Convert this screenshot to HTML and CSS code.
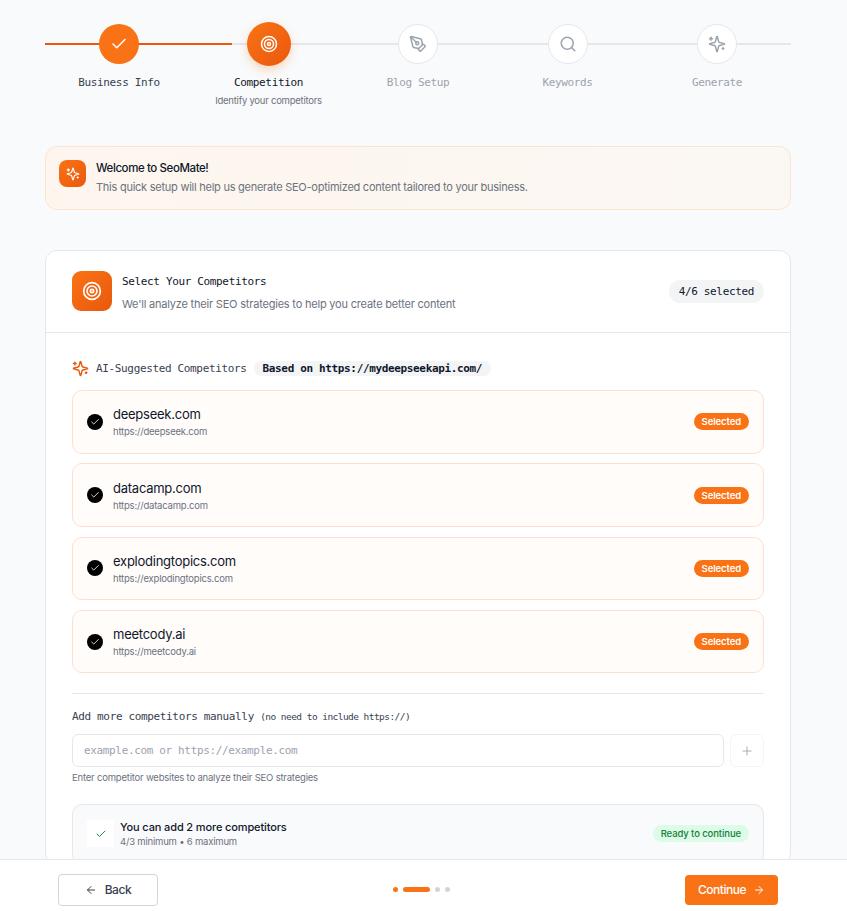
FILE: index.html
```html
<!DOCTYPE html>
<html lang="en">
<head>
    <meta charset="UTF-8">
    <meta name="viewport" content="width=device-width, initial-scale=1.0">
    <title>SeoMate Setup</title>
    <link rel="stylesheet" href="styles.css">
</head>
<body>
    <svg class="icon-defs" aria-hidden="true">
        <symbol id="i-check" viewBox="0 0 24 24"><path d="M20 6 9 17l-5-5"/></symbol>
        <symbol id="i-target" viewBox="0 0 24 24"><circle cx="12" cy="12" r="10"/><circle cx="12" cy="12" r="6"/><circle cx="12" cy="12" r="2"/></symbol>
        <symbol id="i-pen" viewBox="0 0 24 24"><path d="M15.707 21.293a1 1 0 0 1-1.414 0l-1.586-1.586a1 1 0 0 1 0-1.414l5.586-5.586a1 1 0 0 1 1.414 0l1.586 1.586a1 1 0 0 1 0 1.414z"/><path d="m18 13-1.375-6.874a1 1 0 0 0-.746-.776L3.235 2.028a1 1 0 0 0-1.207 1.207L5.35 15.879a1 1 0 0 0 .776.746L13 18"/><path d="m2.3 2.3 7.286 7.286"/><circle cx="11" cy="11" r="2"/></symbol>
        <symbol id="i-search" viewBox="0 0 24 24"><circle cx="11" cy="11" r="8"/><path d="m21 21-4.3-4.3"/></symbol>
        <symbol id="i-sparkles" viewBox="0 0 24 24"><path d="M14.063 15.5A2 2 0 0 1 15.5 14.063l6.135-1.582a.5.5 0 0 0 0-.962L15.5 9.936A2 2 0 0 1 14.063 8.5l-1.582-6.135a.5.5 0 0 0-.963 0L9.937 8.5A2 2 0 0 1 8.5 9.937l-6.135 1.581a.5.5 0 0 0 0 .964L8.5 14.063a2 2 0 0 1 1.437 1.437l1.582 6.135a.5.5 0 0 0 .963 0z"/><path d="M4 3v4"/><path d="M2 5h4"/><path d="M20 17v2"/><path d="M19 18h2"/></symbol>
        <symbol id="i-plus" viewBox="0 0 24 24"><path d="M5 12h14"/><path d="M12 5v14"/></symbol>
        <symbol id="i-left" viewBox="0 0 24 24"><path d="m12 19-7-7 7-7"/><path d="M19 12H5"/></symbol>
        <symbol id="i-right" viewBox="0 0 24 24"><path d="M5 12h14"/><path d="m12 5 7 7-7 7"/></symbol>
    </svg>

    <main class="content">
        <div class="stepper">
            <div class="stepper-track"><div class="stepper-progress"></div></div>

            <div class="step step-done">
                <div class="step-circle"><svg class="icon"><use href="#i-check"/></svg></div>
                <div class="step-label">Business Info</div>
            </div>
            <div class="step step-active">
                <div class="step-circle"><svg class="icon"><use href="#i-target"/></svg></div>
                <div class="step-label">Competition</div>
                <div class="step-sub">Identify your competitors</div>
            </div>
            <div class="step">
                <div class="step-circle"><svg class="icon"><use href="#i-pen"/></svg></div>
                <div class="step-label">Blog Setup</div>
            </div>
            <div class="step">
                <div class="step-circle"><svg class="icon"><use href="#i-search"/></svg></div>
                <div class="step-label">Keywords</div>
            </div>
            <div class="step">
                <div class="step-circle"><svg class="icon"><use href="#i-sparkles"/></svg></div>
                <div class="step-label">Generate</div>
            </div>
        </div>

        <div class="welcome">
            <div class="welcome-icon"><svg class="icon"><use href="#i-sparkles"/></svg></div>
            <div>
                <h3>Welcome to SeoMate!</h3>
                <p>This quick setup will help us generate SEO-optimized content tailored to your business.</p>
            </div>
        </div>

        <section class="card">
            <div class="card-header">
                <div class="card-icon"><svg class="icon"><use href="#i-target"/></svg></div>
                <div class="card-heading">
                    <h2>Select Your Competitors</h2>
                    <p>We'll analyze their SEO strategies to help you create better content</p>
                </div>
                <span class="count-badge">4/6 selected</span>
            </div>

            <div class="card-body">
                <div class="suggest-title">
                    <svg class="icon"><use href="#i-sparkles"/></svg>
                    <span>AI-Suggested Competitors</span>
                    <span class="based-on">Based on https://mydeepseekapi.com/</span>
                </div>

                <div class="competitor-list">
                    <div class="competitor">
                        <div class="competitor-check"><svg class="icon"><use href="#i-check"/></svg></div>
                        <div class="competitor-info">
                            <div class="competitor-name">deepseek.com</div>
                            <div class="competitor-url">https://deepseek.com</div>
                        </div>
                        <span class="selected-tag">Selected</span>
                    </div>
                    <div class="competitor">
                        <div class="competitor-check"><svg class="icon"><use href="#i-check"/></svg></div>
                        <div class="competitor-info">
                            <div class="competitor-name">datacamp.com</div>
                            <div class="competitor-url">https://datacamp.com</div>
                        </div>
                        <span class="selected-tag">Selected</span>
                    </div>
                    <div class="competitor">
                        <div class="competitor-check"><svg class="icon"><use href="#i-check"/></svg></div>
                        <div class="competitor-info">
                            <div class="competitor-name">explodingtopics.com</div>
                            <div class="competitor-url">https://explodingtopics.com</div>
                        </div>
                        <span class="selected-tag">Selected</span>
                    </div>
                    <div class="competitor">
                        <div class="competitor-check"><svg class="icon"><use href="#i-check"/></svg></div>
                        <div class="competitor-info">
                            <div class="competitor-name">meetcody.ai</div>
                            <div class="competitor-url">https://meetcody.ai</div>
                        </div>
                        <span class="selected-tag">Selected</span>
                    </div>
                </div>

                <div class="manual">
                    <div class="manual-label">Add more competitors manually <small>(no need to include https://)</small></div>
                    <div class="manual-row">
                        <input class="manual-input" type="text" placeholder="example.com or https://example.com">
                        <button class="add-btn" type="button"><svg class="icon"><use href="#i-plus"/></svg></button>
                    </div>
                    <div class="manual-help">Enter competitor websites to analyze their SEO strategies</div>
                </div>

                <div class="status">
                    <div class="status-icon"><svg class="icon"><use href="#i-check"/></svg></div>
                    <div class="status-text">
                        <div class="status-title">You can add 2 more competitors</div>
                        <div class="status-sub">4/3 minimum • 6 maximum</div>
                    </div>
                    <span class="ready-tag">Ready to continue</span>
                </div>
            </div>
        </section>
    </main>

    <footer class="footer">
        <button class="btn-back" type="button"><svg class="icon"><use href="#i-left"/></svg>Back</button>
        <div class="dots">
            <span class="dot dot-on"></span>
            <span class="dot dot-wide"></span>
            <span class="dot"></span>
            <span class="dot"></span>
        </div>
        <button class="btn-next" type="button">Continue<svg class="icon"><use href="#i-right"/></svg></button>
    </footer>
</body>
</html>
```

FILE: styles.css
```css
* {
    box-sizing: border-box;
}

html, body {
    height: 100%;
}

body {
    margin: 0;
    display: flex;
    flex-direction: column;
    overflow: hidden;
    background-color: #f9fafb;
    color: #0f172a;
    font-family: 'Inter', sans-serif;
}

h2, h3, p {
    margin: 0;
}

/* Monospace labels are narrower than any installed mono, so tighten them */
.step-label, .card-heading h2, .count-badge, .suggest-title, .manual-label, .manual-input {
    font-family: 'DejaVu Sans Mono', monospace;
    font-size: 11px;
    letter-spacing: -0.35px;
}

.icon-defs {
    display: none;
}

.icon {
    display: block;
    fill: none;
    stroke: currentColor;
    stroke-width: 2;
    stroke-linecap: round;
    stroke-linejoin: round;
}

.content {
    flex: 1;
    min-height: 0;
    overflow: hidden;
    padding: 22px 56px 0 45px;
}

/* Stepper */
.stepper {
    position: relative;
    display: flex;
    margin: 0 -0.75px 36px;
    height: 88px;
}

.stepper-track {
    position: absolute;
    top: 21px;
    left: 0.75px;
    right: 0.75px;
    height: 2px;
    background-color: #e5e7eb;
}

.stepper-progress {
    width: 25%;
    height: 100%;
    background-color: #ea580c;
}

.step {
    position: relative;
    flex: 1;
    display: flex;
    flex-direction: column;
    align-items: center;
}

.step-circle {
    width: 40px;
    height: 40px;
    margin: 2px 0 11px;
    display: flex;
    align-items: center;
    justify-content: center;
    border: 1px solid #e5e7eb;
    border-radius: 50%;
    background-color: #fff;
    color: #9ca3af;
}

.step-circle .icon {
    width: 18px;
    height: 18px;
}

.step-label {
    line-height: 16px;
    color: #9ca3af;
}

.step-sub {
    margin-top: 2px;
    font-size: 9.5px;
    letter-spacing: -0.24px;
    line-height: 15px;
    color: #6b7280;
    white-space: nowrap;
}

.step-done .step-circle {
    border: none;
    background-color: #f97316;
    color: #fff;
}

.step-done .step-label {
    color: #374151;
}

.step-active .step-circle {
    width: 44px;
    height: 44px;
    margin: 0 0 9px;
    border: none;
    background: linear-gradient(135deg, #f97316, #ea580c);
    color: #fff;
    box-shadow: 0 4px 10px rgba(249, 115, 22, 0.25);
}

.step-active .step-label {
    color: #0f172a;
}

/* Welcome banner */
.welcome {
    display: flex;
    gap: 10px;
    height: 64px;
    padding: 13px 13px;
    margin-bottom: 40px;
    border: 1px solid #fde4cd;
    border-radius: 12px;
    background: linear-gradient(90deg, #fef6ee, #fbf7f3);
}

.welcome-icon {
    flex-shrink: 0;
    width: 27px;
    height: 27px;
    display: flex;
    align-items: center;
    justify-content: center;
    border-radius: 8px;
    background: linear-gradient(135deg, #f97316, #ea580c);
    color: #fff;
}

.welcome-icon .icon {
    width: 14px;
    height: 14px;
}

.welcome h3 {
    font-size: 11.5px;
    font-weight: 500;
    letter-spacing: -0.41px;
    line-height: 16px;
    margin-bottom: 3px;
}

.welcome p {
    font-size: 11px;
    letter-spacing: -0.25px;
    line-height: 16px;
    color: #6b7280;
}

/* Main card */
.card {
    border: 1px solid #e5e7eb;
    border-radius: 12px;
    background-color: #fff;
}

.card-header {
    display: flex;
    align-items: center;
    gap: 10px;
    height: 82px;
    padding: 0 26px 1px;
    border-bottom: 1px solid #e5e7eb;
}

.card-icon {
    flex-shrink: 0;
    width: 40px;
    height: 40px;
    display: flex;
    align-items: center;
    justify-content: center;
    border-radius: 9px;
    background: linear-gradient(135deg, #f97316, #ea580c);
    color: #fff;
}

.card-icon .icon {
    width: 20px;
    height: 20px;
}

.card-heading {
    flex: 1;
    padding-top: 3px;
}

.card-heading h2 {
    font-weight: 400;
    line-height: 16px;
    margin-bottom: 6px;
}

.card-heading p {
    font-size: 11px;
    letter-spacing: -0.2px;
    line-height: 16px;
    color: #6b7280;
}

.count-badge {
    padding: 4px 10px;
    border-radius: 12px;
    background-color: #f3f4f6;
    line-height: 15px;
}

.card-body {
    padding: 26px 26px 0;
}

.suggest-title {
    display: flex;
    align-items: center;
    height: 18px;
    margin-bottom: 13px;
    color: #374151;
}

.suggest-title .icon {
    width: 17px;
    height: 17px;
    margin-right: 7px;
    color: #ea580c;
}

.based-on {
    margin-left: 7px;
    padding: 1px 9px;
    border-radius: 9px;
    background-color: #f3f4f6;
    font-weight: 700;
    color: #0f172a;
}

.competitor-list {
    display: flex;
    flex-direction: column;
    gap: 9.83px;
}

.competitor {
    display: flex;
    align-items: center;
    height: 63.5px;
    padding: 0 14px;
    border: 1px solid #fedfcf;
    border-radius: 10px;
    background-color: #fffcfa;
}

.competitor-check {
    flex-shrink: 0;
    width: 16px;
    height: 16px;
    margin-right: 10px;
    display: flex;
    align-items: center;
    justify-content: center;
    border-radius: 50%;
    background-color: #000;
    color: #fff;
}

.competitor-check .icon {
    width: 10px;
    height: 10px;
}

.competitor-info {
    flex: 1;
    padding-top: 1px;
}

.competitor-name {
    font-size: 13px;
    letter-spacing: -0.25px;
    line-height: 18px;
    margin-bottom: 2px;
}

.competitor-url {
    font-size: 9.5px;
    letter-spacing: -0.2px;
    line-height: 14px;
    color: #6b7280;
}

.selected-tag {
    padding: 2px 8px;
    border-radius: 9px;
    background-color: #f97316;
    color: #fff;
    font-size: 9.5px;
    font-weight: 600;
    letter-spacing: -0.1px;
    line-height: 13px;
}

.manual {
    margin-top: 20px;
    padding-top: 15px;
    border-top: 1px solid #e5e7eb;
}

.manual-label {
    line-height: 16px;
    margin-bottom: 9px;
    color: #374151;
}

.manual-label small {
    font-size: 9.5px;
    letter-spacing: -0.55px;
}

.manual-row {
    display: flex;
    gap: 6px;
}

.manual-input {
    flex: 1;
    height: 33px;
    padding: 0 11px;
    border: 1px solid #e5e7eb;
    border-radius: 6px;
}

.manual-input::placeholder {
    color: #9ca3af;
}

.add-btn {
    width: 34px;
    height: 33px;
    padding: 0;
    display: flex;
    align-items: center;
    justify-content: center;
    border: 1px solid #f3f4f6;
    border-radius: 6px;
    background-color: #fff;
    color: #9ca3af;
}

.add-btn .icon {
    width: 14px;
    height: 14px;
    stroke-width: 1.5;
}

.manual-help {
    margin-top: 4px;
    font-size: 9.5px;
    letter-spacing: -0.2px;
    line-height: 14px;
    color: #6b7280;
}

.status {
    display: flex;
    align-items: center;
    height: 60px;
    margin-top: 19px;
    padding: 0 14px 1px 14px;
    border: 1px solid #e5e7eb;
    border-radius: 10px;
    background-color: #f9fafb;
}

.status-icon {
    flex-shrink: 0;
    width: 27px;
    height: 27px;
    margin-right: 6px;
    display: flex;
    align-items: center;
    justify-content: center;
    background-color: #fff;
    color: #16924a;
}

.status-icon .icon {
    width: 12px;
    height: 12px;
}

.status-text {
    flex: 1;
}

.status-title {
    font-size: 11px;
    font-weight: 500;
    letter-spacing: -0.13px;
    line-height: 16px;
}

.status-sub {
    font-size: 9.5px;
    letter-spacing: -0.2px;
    line-height: 14px;
    color: #6b7280;
}

.ready-tag {
    padding: 2px 8px;
    border-radius: 9px;
    background-color: #dcfce7;
    color: #15803d;
    font-size: 9.5px;
    font-weight: 500;
    letter-spacing: -0.1px;
    line-height: 13px;
}

/* Footer */
.footer {
    flex-shrink: 0;
    height: 52px;
    display: flex;
    align-items: center;
    justify-content: space-between;
    padding: 8px 69px 0 58px;
    border-top: 1px solid #e5e7eb;
    background-color: #fff;
}

.btn-back, .btn-next {
    display: flex;
    align-items: center;
    justify-content: center;
    font-family: 'Inter', sans-serif;
    font-size: 12px;
    font-weight: 500;
}

.btn-back {
    gap: 8px;
    width: 100px;
    height: 32px;
    border: 1px solid #d1d5db;
    border-radius: 4px;
    background-color: #fff;
    color: #374151;
    letter-spacing: -0.4px;
}

.btn-next {
    gap: 7px;
    width: 93px;
    height: 30px;
    border: none;
    border-radius: 4px;
    background-color: #f97316;
    color: #fff;
    letter-spacing: -0.5px;
}

.btn-back .icon, .btn-next .icon {
    width: 12px;
    height: 12px;
}

.dots {
    display: flex;
    align-items: center;
    gap: 5px;
}

.dot {
    width: 5px;
    height: 5px;
    border-radius: 50%;
    background-color: #d1d5db;
}

.dot-on {
    background-color: #f97316;
}

.dot-wide {
    width: 27px;
    border-radius: 3px;
    background-color: #f97316;
}
```
